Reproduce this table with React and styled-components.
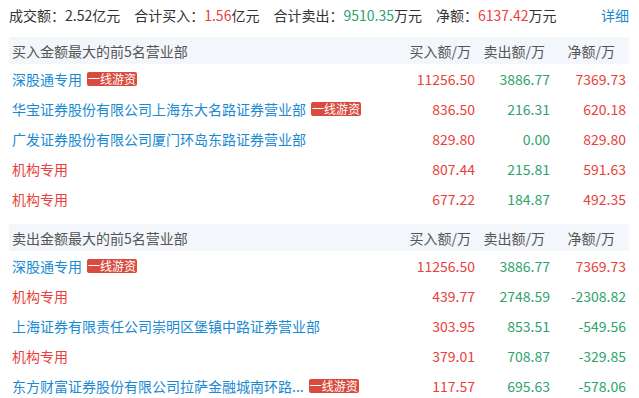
import React from 'react';
import styled, { createGlobalStyle } from 'styled-components';

const GlobalStyle = createGlobalStyle`
  body {
    margin: 0;
    background: #fff;
    font-family: 'Microsoft YaHei', 'Noto Sans CJK SC', 'Noto Sans', sans-serif;
  }
`;

const RED = '#e8423c';
const GREEN = '#2fa36e';
const BLUE = '#1a8ad2';

const Page = styled.div`
  padding: 0 10px 0 9px;
  font-size: 14px;
  color: #333;
`;

const Summary = styled.div`
  display: flex;
  align-items: center;
  height: 30px;
  line-height: 30px;
  white-space: nowrap;
`;

const Stat = styled.span`
  margin-right: 14px;
`;

const Value = styled.span`
  color: ${(p) => p.$color || '#333'};
`;

const Detail = styled.a`
  margin-left: auto;
  color: ${BLUE};
  text-decoration: none;
  cursor: pointer;
`;

const Section = styled.div`
  margin-top: ${(p) => p.$gap}px;
`;

const Grid = styled.div`
  display: grid;
  grid-template-columns: 1fr 77px 75px 79px;
  align-items: center;
  white-space: nowrap;
`;

const HeadRow = styled(Grid)`
  height: 27px;
  background: #f3f6fa;
  color: #555;
`;

const HeadCell = styled.div`
  text-align: ${(p) => (p.$left ? 'left' : 'right')};
  padding-left: ${(p) => (p.$left ? 3 : 0)}px;
  padding-right: ${(p) => p.$pr || 0}px;
`;

const Row = styled(Grid)`
  height: 30px;
`;

const NameCell = styled.div`
  display: flex;
  align-items: center;
  gap: 5px;
  padding-left: 3px;
  min-width: 0;
`;

const Name = styled.a`
  color: ${(p) => (p.$inst ? RED : BLUE)};
  text-decoration: none;
  cursor: pointer;
`;

const Tag = styled.span`
  display: inline-block;
  height: 14px;
  line-height: 14px;
  padding: 0 1px;
  font-size: 12px;
  color: #fff;
  background: #d94b3d;
  border-radius: 2px;
`;

const Num = styled.div`
  text-align: right;
  padding-right: ${(p) => p.$pr || 0}px;
  color: ${(p) => p.$color};
`;

const buyTop = [
  { name: '深股通专用', tag: true, buy: '11256.50', sell: '3886.77', net: '7369.73' },
  { name: '华宝证券股份有限公司上海东大名路证券营业部', tag: true, buy: '836.50', sell: '216.31', net: '620.18' },
  { name: '广发证券股份有限公司厦门环岛东路证券营业部', buy: '829.80', sell: '0.00', net: '829.80' },
  { name: '机构专用', inst: true, buy: '807.44', sell: '215.81', net: '591.63' },
  { name: '机构专用', inst: true, buy: '677.22', sell: '184.87', net: '492.35' },
];

const sellTop = [
  { name: '深股通专用', tag: true, buy: '11256.50', sell: '3886.77', net: '7369.73' },
  { name: '机构专用', inst: true, buy: '439.77', sell: '2748.59', net: '-2308.82' },
  { name: '上海证券有限责任公司崇明区堡镇中路证券营业部', buy: '303.95', sell: '853.51', net: '-549.56' },
  { name: '机构专用', inst: true, buy: '379.01', sell: '708.87', net: '-329.85' },
  { name: '东方财富证券股份有限公司拉萨金融城南环路...', tag: true, buy: '117.57', sell: '695.63', net: '-578.06' },
];

function Table({ title, rows, gap }) {
  return (
    <Section $gap={gap}>
      <HeadRow>
        <HeadCell $left>{title}</HeadCell>
        <HeadCell $pr={4}>买入额/万</HeadCell>
        <HeadCell $pr={5}>卖出额/万</HeadCell>
        <HeadCell $pr={14}>净额/万</HeadCell>
      </HeadRow>
      {rows.map((r, i) => (
        <Row key={i}>
          <NameCell>
            <Name $inst={r.inst}>{r.name}</Name>
            {r.tag && <Tag>一线游资</Tag>}
          </NameCell>
          <Num $color={RED}>{r.buy}</Num>
          <Num $color={GREEN}>{r.sell}</Num>
          <Num $pr={3} $color={r.net.startsWith('-') ? GREEN : RED}>{r.net}</Num>
        </Row>
      ))}
    </Section>
  );
}

export default function App() {
  return (
    <Page>
      <GlobalStyle />
      <Summary>
        <Stat>成交额：2.52亿元</Stat>
        <Stat>合计买入：<Value $color={RED}>1.56</Value>亿元</Stat>
        <Stat>合计卖出：<Value $color={GREEN}>9510.35</Value>万元</Stat>
        <Stat>净额：<Value $color={RED}>6137.42</Value>万元</Stat>
        <Detail>详细</Detail>
      </Summary>
      <Table title="买入金额最大的前5名营业部" rows={buyTop} gap={7} />
      <Table title="卖出金额最大的前5名营业部" rows={sellTop} gap={10} />
    </Page>
  );
}
